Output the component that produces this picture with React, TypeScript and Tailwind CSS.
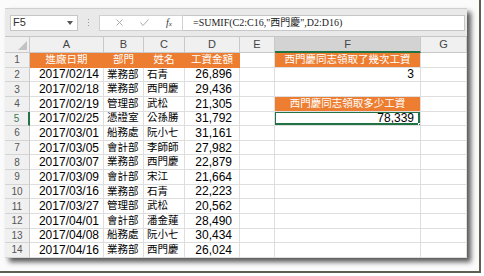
import React from "react";

const rows: [string, string, string, string][] = [
  ["2017/02/14", "業務部", "石青", "26,896"],
  ["2017/02/18", "業務部", "西門慶", "29,436"],
  ["2017/02/19", "管理部", "武松", "21,305"],
  ["2017/02/25", "憑證室", "公孫勝", "31,792"],
  ["2017/03/01", "船務處", "阮小七", "31,161"],
  ["2017/03/05", "會計部", "李師師", "27,982"],
  ["2017/03/07", "業務部", "西門慶", "22,879"],
  ["2017/03/09", "會計部", "宋江", "21,664"],
  ["2017/03/16", "業務部", "石青", "22,223"],
  ["2017/03/27", "管理部", "武松", "20,562"],
  ["2017/04/01", "會計部", "潘金蓮", "28,490"],
  ["2017/04/08", "船務處", "阮小七", "30,434"],
  ["2017/04/16", "業務部", "西門慶", "26,024"],
];

const cell = "border-r border-b border-[#dedede] flex items-center overflow-hidden whitespace-nowrap";
const hdr = "flex items-center justify-center border-r border-b border-[#c9c9c9] bg-[#f0f0f0] text-[11px] text-[#444]";

const RowHead = ({ n }: { n: number }) => (
  <div
    className={`flex items-center justify-center border-b border-[#d4d4d4] bg-[#f0f0f0] text-[10px] ${
      n === 5 ? "border-r-2 border-r-[#217346] text-[#3c7a58] bg-[#e8e8e8]" : "border-r border-r-[#c9c9c9] text-[#555]"
    }`}
  >
    {n}
  </div>
);

const FCell = ({ n }: { n: number }) => {
  if (n === 1)
    return (
      <div className={`${cell} bg-[#ed7d31] text-white text-[10.5px] justify-center`}>西門慶同志領取了幾次工資</div>
    );
  if (n === 2) return <div className={`${cell} justify-end pr-[6px] text-[12px]`}>3</div>;
  if (n === 4)
    return <div className={`${cell} bg-[#ed7d31] text-white text-[10.5px] justify-center`}>西門慶同志領取多少工資</div>;
  if (n === 5)
    return (
      <div className={`${cell} relative justify-end pr-[6px] text-[12px]`}>
        78,339
        <div className="absolute -left-px -top-px -right-0 -bottom-0 border-2 border-[#217346]" />
        <div className="absolute -right-[3px] -bottom-[3px] w-[5px] h-[5px] bg-[#217346] border border-white" />
      </div>
    );
  return <div className={cell} />;
};

export default function App() {
  return (
    <div className="w-[484px] h-[276px] bg-white font-['Liberation_Sans','Noto_Sans_CJK_TC',sans-serif]">
      <div className="w-[481px] h-[273px] pt-[8px] pl-[5px] border-r-2 border-b-2 border-[#5c6052] bg-[#fbfbfb]">
        <div className="w-[462px] h-[250px] bg-white flex flex-col shadow-[4px_4px_5px_rgba(0,0,0,0.65)]">
          {/* formula bar */}
          <div className="h-[29px] bg-[#e9e9e9] border-t border-[#cfcfcf] border-b border-b-[#c6c6c6] flex items-center pl-[5px] pr-[2px]">
            <div className="w-[68px] h-[16px] bg-white border border-[#c6c6c6] flex items-center justify-between pl-[2px] pr-[4px] text-[11px] text-[#333]">
              <span>F5</span>
              <svg width="6" height="4" viewBox="0 0 6 4">
                <path d="M0 0h6L3 4z" fill="#555" />
              </svg>
            </div>
            <div className="w-[21px] flex flex-col items-center gap-[2px]">
              <div className="w-[1px] h-[1px] bg-[#999]" />
              <div className="w-[1px] h-[1px] bg-[#999]" />
              <div className="w-[1px] h-[1px] bg-[#999]" />
            </div>
            <div className="w-[84px] h-[16px] bg-white border border-[#d0d0d0] flex items-center pl-[16px] gap-[17px]">
              <svg width="7" height="7" viewBox="0 0 7 7">
                <path d="M0.5 0.5l6 6M6.5 0.5l-6 6" stroke="#a8a8a8" strokeWidth="1" />
              </svg>
              <svg width="9" height="7" viewBox="0 0 9 7">
                <path d="M0.5 3.5l2.5 3L8.5 0.5" stroke="#a8a8a8" strokeWidth="1" fill="none" />
              </svg>
              <span className="font-['Liberation_Serif'] italic text-[10px] text-[#333] leading-none">
                f<span className="text-[7px]">x</span>
              </span>
            </div>
            <div className="flex-1 h-[16px] bg-white border border-[#c6c6c6] border-l-0 flex items-center pl-[10px] text-[10px] text-[#222] font-['Liberation_Serif','Noto_Sans_CJK_TC',serif]">
              =SUMIF(C2:C16,"西門慶",D2:D16)
            </div>
          </div>
          {/* sheet */}
          <div className="grid grid-cols-[25px_74px_40px_41px_55px_35px_146px_46px] grid-rows-[16px_repeat(14,14.64px)] flex-1 text-black">
            <div className="relative border-r border-b border-[#c9c9c9] bg-[#f0f0f0]">
              <svg className="absolute right-[2px] bottom-[2px]" width="9" height="9" viewBox="0 0 9 9">
                <path d="M9 0V9H0z" fill="#c2c2c2" />
              </svg>
            </div>
            {["A", "B", "C", "D", "E"].map((c) => (
              <div key={c} className={hdr}>
                {c}
              </div>
            ))}
            <div className="flex items-center justify-center border-r border-[#c9c9c9] border-b-2 border-b-[#217346] bg-[#d3d3d3] text-[11px] text-[#444]">
              F
            </div>
            <div className={hdr}>G</div>

            <RowHead n={1} />
            {["進廠日期", "部門", "姓名", "工資金額"].map((t) => (
              <div key={t} className={`${cell} bg-[#ed7d31] border-[#ed7d31] text-white text-[10.5px] justify-center`}>
                {t}
              </div>
            ))}
            <div className={cell} />
            <FCell n={1} />
            <div className={cell} />

            {rows.map((r, i) => {
              const n = i + 2;
              return (
                <React.Fragment key={n}>
                  <RowHead n={n} />
                  <div className={`${cell} justify-end pr-[4px] text-[12px]`}>{r[0]}</div>
                  <div className={`${cell} pl-[3px] text-[10.5px]`}>{r[1]}</div>
                  <div className={`${cell} pl-[3px] text-[10.5px]`}>{r[2]}</div>
                  <div className={`${cell} justify-end pr-[7px] text-[12px]`}>{r[3]}</div>
                  <div className={cell} />
                  <FCell n={n} />
                  <div className={cell} />
                </React.Fragment>
              );
            })}
          </div>
        </div>
      </div>
    </div>
  );
}
